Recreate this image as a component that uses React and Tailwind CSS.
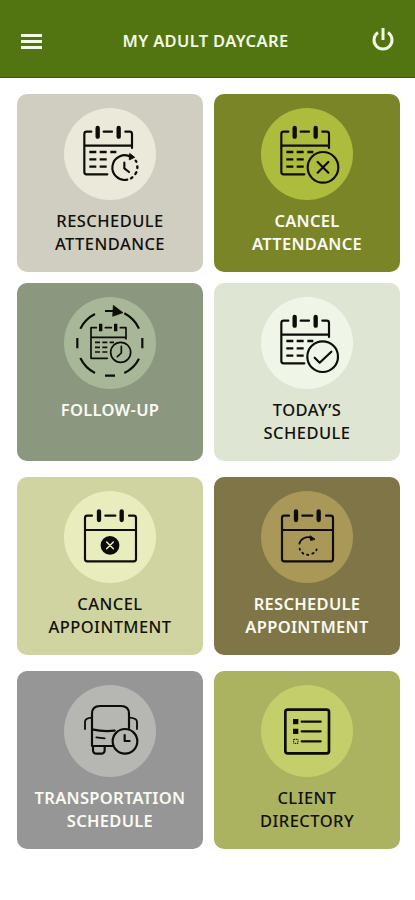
import clsx from "clsx";

function Icon({ children }) {
  return (
    <svg viewBox="0 0 276 276" className="w-full h-full" fill="none" stroke="#0c0d08" strokeWidth="6.5" strokeLinecap="round" strokeLinejoin="round">
      {children}
    </svg>
  );
}

// calendar with the bottom right corner left open for a badge
function OpenCalendar() {
  return (
    <>
      <path d="M82 71H68Q61 71 61 78V192Q61 199 68 199H130M119 71H144M184 71H197Q204 71 204 78V120M61 113H204" />
      <path d="M101 60V86M164 60V86" strokeWidth="13" />
      <path d="M76 132H97M107 132H128M139 132H157M76 154H97M107 154H128M76 176H97M107 176H128" strokeLinecap="butt" strokeWidth="7" />
    </>
  );
}

function FullCalendar() {
  return (
    <>
      <path d="M84 74H70Q63 74 63 81V204Q63 211 70 211H209Q216 211 216 204V81Q216 74 209 74H195M124 74H154M63 117H216" />
      <path d="M105 61V87M173 61V87" strokeWidth="13" />
    </>
  );
}

function RescheduleAttendanceIcon() {
  return (
    <Icon>
      <OpenCalendar />
      <path d="M201 147A37 37 0 1 0 190 215" />
      <path d="M201 211L205 208M214 198L217 193M220 180V175M217 161L215 158" strokeWidth="7" />
      <path d="M198 137L212 148L197 155Z" fill="#0c0d08" strokeWidth="3" />
      <path d="M181 164V181L195 192" />
    </Icon>
  );
}

function CancelAttendanceIcon() {
  return (
    <Icon>
      <OpenCalendar />
      <circle cx="186" cy="178" r="46" />
      <path d="M170 162L202 194M202 162L170 194" />
    </Icon>
  );
}

function FollowUpIcon() {
  return (
    <Icon>
      <g strokeLinecap="butt">
        <path d="M181 49A98 98 0 0 1 225 95M93 51A98 98 0 0 0 49 95M40 123V154M235 123V154M49 183A98 98 0 0 0 93 228M123 236H153M225 185A98 98 0 0 1 181 228M123 42H149" />
        <path d="M148 25L177 47L146 58Z" fill="#0c0d08" strokeWidth="2" />
        <path d="M110 80V103M155 80V103" strokeWidth="10" />
        <path d="M93 136H108M115 136H130M137 136H150M93 151H108M115 151H130M93 165H108M115 165H130" strokeWidth="5" />
      </g>
      <path d="M97 92H81V184H130M124 92H142M169 92H186V126M81 121H186" strokeWidth="5" />
      <circle cx="170" cy="166" r="30" strokeWidth="5" />
      <path d="M172 148V168L160 179" strokeWidth="5" />
    </Icon>
  );
}

function TodayIcon() {
  return (
    <Icon>
      <OpenCalendar />
      <circle cx="185" cy="179" r="46" />
      <path d="M161 182L176 197L211 164" />
    </Icon>
  );
}

function CancelAppointmentIcon() {
  return (
    <Icon>
      <FullCalendar />
      <circle cx="138" cy="163" r="25" fill="#0c0d08" />
      <path d="M128 153L148 173M148 153L128 173" stroke="#e9edbd" strokeWidth="4.5" />
    </Icon>
  );
}

function RescheduleAppointmentIcon() {
  return (
    <Icon>
      <FullCalendar />
      <path d="M115 158A27 27 0 0 1 152 141" strokeWidth="5.5" />
      <path d="M148 135L162 145L150 148Z" fill="#0c0d08" strokeWidth="3" />
      <path d="M116 173L117 176M124 185L127 188M138 191L142 192M154 188L158 186M166 178L167 175" strokeWidth="5.5" />
    </Icon>
  );
}

function BusIcon() {
  return (
    <Icon>
      <path d="M147 183H84V86Q84 63 108 63H171Q195 63 195 86V130M84 133Q118 141 152 137" />
      <path d="M84 98Q63 99 63 111V132M195 98Q219 99 219 111V132M97 157L122 160" strokeWidth="5.5" />
      <path d="M87 183V195Q87 206 98 206H111Q122 206 122 195V183" />
      <circle cx="183" cy="169" r="37" />
      <path d="M182 150V168H197" />
    </Icon>
  );
}

function DirectoryIcon() {
  return (
    <Icon>
      <rect x="73" y="74" width="131" height="131" rx="7" strokeWidth="8" />
      <path d="M122 110H179M122 139H179M122 169H179" />
      <g strokeLinecap="butt" strokeLinejoin="miter">
        <path d="M96 102H112V118H96ZM96 131H112V147H96Z" fill="#0c0d08" stroke="none" />
        <path d="M98 163H111V175H98Z" strokeWidth="3" strokeDasharray="4 2" />
      </g>
    </Icon>
  );
}

const dark = "text-[#11110c] font-medium tracking-[0.45px]";
const light = "text-[#fafaf2] font-semibold tracking-[0.3px]";

const rows = [
  [
    { lines: ["RESCHEDULE", "ATTENDANCE"], card: "bg-[#d0cec1]", circle: "bg-[#ebe9d9]", text: dark, icon: RescheduleAttendanceIcon },
    { lines: ["CANCEL", "ATTENDANCE"], card: "bg-[#7a8527]", circle: "bg-[#aebc3d]", text: light, icon: CancelAttendanceIcon },
  ],
  [
    { lines: ["FOLLOW-UP"], card: "bg-[#8b987f]", circle: "bg-[#a8b797]", text: light, icon: FollowUpIcon },
    { lines: ["TODAY’S", "SCHEDULE"], card: "bg-[#dee5d3]", circle: "bg-[#eff5e7]", text: dark, icon: TodayIcon },
  ],
  [
    { lines: ["CANCEL", "APPOINTMENT"], card: "bg-[#d0d4a0]", circle: "bg-[#e9edbd]", text: dark, icon: CancelAppointmentIcon },
    { lines: ["RESCHEDULE", "APPOINTMENT"], card: "bg-[#807546]", circle: "bg-[#a99857]", text: light, icon: RescheduleAppointmentIcon },
  ],
  [
    { lines: ["TRANSPORTATION", "SCHEDULE"], card: "bg-[#969696]", circle: "bg-[#b6b7b3]", text: light, icon: BusIcon },
    { lines: ["CLIENT", "DIRECTORY"], card: "bg-[#abb260]", circle: "bg-[#c4ce6a]", text: dark, icon: DirectoryIcon },
  ],
];

function Tile({ tile }) {
  const TileIcon = tile.icon;
  return (
    <button type="button" className={clsx("flex h-[178px] w-[186px] flex-col items-center justify-start rounded-[10px] pt-3.5", tile.card)}>
      <span className={clsx("block size-[92px] shrink-0 rounded-full", tile.circle)}>
        <TileIcon />
      </span>
      <span className={clsx("mt-[9px] block text-[16.5px] leading-[23.4px] whitespace-nowrap", tile.text)}>
        {tile.lines.map((line) => (
          <span key={line} className="block">{line}</span>
        ))}
      </span>
    </button>
  );
}

export default function App() {
  return (
    <div className="min-h-[900px] w-full bg-white font-['Noto_Sans',sans-serif]">
      <header className="flex h-[78px] items-center justify-between border-b border-[#365a10] bg-[#527512] pt-1.5 pr-[20px] pl-[21px] text-[#f2f9e4]">
        <button type="button" aria-label="Menu" className="flex w-[21px] flex-col gap-[3px]">
          <span className="h-[3px] bg-current" />
          <span className="h-[3px] bg-current" />
          <span className="h-[3px] bg-current" />
        </button>
        <h1 className="pr-[2px] text-[16.5px] font-semibold whitespace-nowrap tracking-[0.35px]">MY ADULT DAYCARE</h1>
        <button type="button" aria-label="Log out" className="-mt-1">
          <svg viewBox="0 0 24 26" className="h-[26px] w-6" fill="none" stroke="currentColor" strokeWidth="3">
            <path d="M12 1V13" />
            <path d="M7 5.6A9 9 0 1 0 17 5.6" />
          </svg>
        </button>
      </header>

      <main className="flex flex-col gap-4 pt-4 pl-[17px]">
        {rows.map((row, i) => (
          <div key={i} className={clsx("flex gap-[11px]", i === 1 && "-mt-[5px]")}>
            {row.map((tile) => (
              <Tile key={tile.lines.join(" ")} tile={tile} />
            ))}
          </div>
        ))}
      </main>
    </div>
  );
}
